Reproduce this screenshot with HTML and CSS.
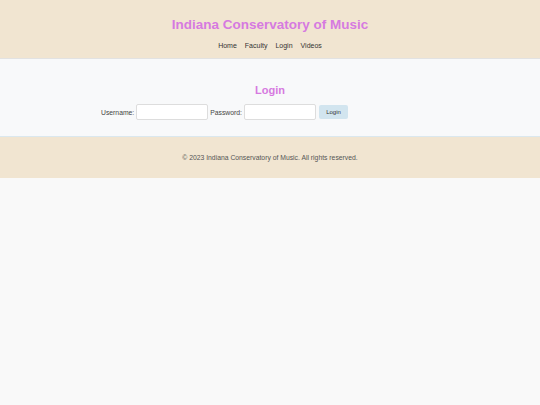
FILE: index.html
```html
<!DOCTYPE html>
<html>
<head>
    <link rel="stylesheet" href="styles.css">
</head>
<body>
    <header class="site-header">
        <h1>Indiana Conservatory of Music</h1>
        <nav class="nav">
            <a href="#">Home</a>
            <a href="#">Faculty</a>
            <a href="#">Login</a>
            <a href="#">Videos</a>
        </nav>
    </header>

    <main class="login-section">
        <h2>Login</h2>
        <form class="login-form">
            <label for="username">Username:</label>
            <input type="text" id="username">
            <label for="password">Password:</label>
            <input type="password" id="password">
            <button type="submit">Login</button>
        </form>
    </main>

    <footer class="site-footer">
        <p>&copy; 2023 Indiana Conservatory of Music. All rights reserved.</p>
    </footer>
</body>
</html>
```

FILE: styles.css
```css
body {
    margin: 0;
    background: #f9f9f9;
    font-family: "Liberation Sans", Arial, sans-serif;
    color: #333;
}
.site-header {
    background: #f1e5d1;
    border-bottom: 1px solid #e2e2e2;
    padding: 16px 0 7px;
    text-align: center;
}
.site-header h1 {
    margin: 0;
    font-size: 13.5px;
    color: #d67ae0;
    line-height: 18px;
}
.nav {
    display: flex;
    justify-content: center;
    gap: 8px;
    margin-top: 7px;
}
.nav a {
    font-size: 7px;
    color: #333;
    text-decoration: none;
    line-height: 10px;
}
.login-section {
    background: #f8f9fa;
    border-bottom: 1px solid #dbe8ee;
    padding: 24px 0 16px;
    text-align: center;
}
.login-section h2 {
    margin: 0 0 7px;
    font-size: 11px;
    line-height: 14px;
    color: #d67ae0;
}
.login-form {
    display: flex;
    align-items: center;
    gap: 2px;
    width: 338px;
    margin: 0 auto;
    font-size: 6.8px;
    color: #444;
}
.login-form input {
    width: 72px;
    height: 16px;
    box-sizing: border-box;
    border: 1px solid #ddd;
    border-radius: 2px;
    background: #fff;
}
.login-form button {
    background: #d2e5ef;
    border: none;
    border-radius: 2px;
    font-family: inherit;
    font-size: 6px;
    color: #333;
    width: 29px;
    height: 14px;
    margin-left: 1px;
}
.site-footer {
    background: #f1e5d1;
    padding: 15px 0;
    text-align: center;
}
.site-footer p {
    margin: 0;
    font-size: 6.8px;
    line-height: 11px;
    color: #555;
}
```
